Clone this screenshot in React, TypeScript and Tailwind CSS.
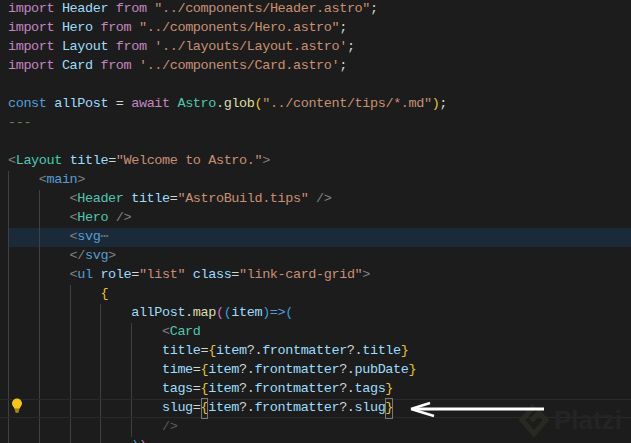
const KW = "text-[#c586c0]";
const VAR = "text-[#9cdcfe]";
const STR = "text-[#c98f74]";
const TAG = "text-[#4ec9b0]";
const BLUE = "text-[#569cd6]";
const GRAY = "text-[#808080]";
const GOLD = "text-[#e6c33a]";
const FN = "text-[#dcdcaa]";
const PINK = "text-[#c86fc4]";
const SKY = "text-[#3d9bdc]";
const TXT = "text-[#d4d4d4]";

type Seg = [string, string];

function Row({
  guides = 0,
  segs = [],
  kind = "plain",
}: {
  guides?: number;
  segs?: Seg[];
  kind?: "plain" | "folded" | "current";
}) {
  const bg =
    kind === "folded"
      ? "bg-[#1b2a39]"
      : kind === "current"
        ? "-ml-2 pl-2 border-y border-[#2a2a2a]"
        : "";
  return (
    <div className={`flex h-[19px] items-center whitespace-pre ${bg}`}>
      {Array.from({ length: guides }).map((_, i) => (
        <span key={i} className="h-full w-[30.8px] shrink-0 border-l border-[#404040]" />
      ))}
      {segs.map(([t, c], i) => (
        <span key={i} className={c}>
          {t}
        </span>
      ))}
    </div>
  );
}

const imp = (name: string, path: string): Seg[] => [
  ["import ", KW],
  [name, VAR],
  [" ", TXT],
  ["from ", KW],
  [path, STR],
  [";", TXT],
];

const MATCHED = `${GOLD} outline outline-1 -outline-offset-1 outline-[#777]`;

export default function App() {
  return (
    <div className="relative h-[443px] w-[631px] overflow-hidden bg-[#1c1c1c]">
      <div className="pl-2 font-['Liberation_Mono',monospace] text-[13.5px] tracking-[-0.4px]">
        <Row segs={imp("Header", '"../components/Header.astro"')} />
        <Row segs={imp("Hero", '"../components/Hero.astro"')} />
        <Row segs={imp("Layout", "'../layouts/Layout.astro'")} />
        <Row segs={imp("Card", "'../components/Card.astro'")} />
        <Row />
        <Row
          segs={[
            ["const ", BLUE],
            ["allPost ", VAR],
            ["= ", TXT],
            ["await ", KW],
            ["Astro", TAG],
            [".", TXT],
            ["glob", FN],
            ["(", GOLD],
            ['"../content/tips/*.md"', STR],
            [")", GOLD],
            [";", TXT],
          ]}
        />
        <Row segs={[["---", "text-[#5f8a4e]"]]} />
        <Row />
        <Row
          segs={[
            ["<", GRAY],
            ["Layout ", TAG],
            ["title", VAR],
            ["=", TXT],
            ['"Welcome to Astro."', STR],
            [">", GRAY],
          ]}
        />
        <Row
          guides={1}
          segs={[
            ["<", GRAY],
            ["main", BLUE],
            [">", GRAY],
          ]}
        />
        <Row
          guides={2}
          segs={[
            ["<", GRAY],
            ["Header ", TAG],
            ["title", VAR],
            ["=", TXT],
            ['"AstroBuild.tips"', STR],
            [" />", GRAY],
          ]}
        />
        <Row
          guides={2}
          segs={[
            ["<", GRAY],
            ["Hero ", TAG],
            ["/>", GRAY],
          ]}
        />
        <Row
          guides={2}
          kind="folded"
          segs={[
            ["<", GRAY],
            ["svg", BLUE],
            ["⋯", "text-[#707070]"],
          ]}
        />
        <Row
          guides={2}
          segs={[
            ["</", GRAY],
            ["svg", BLUE],
            [">", GRAY],
          ]}
        />
        <Row
          guides={2}
          segs={[
            ["<", GRAY],
            ["ul ", BLUE],
            ["role", VAR],
            ["=", TXT],
            ['"list" ', STR],
            ["class", VAR],
            ["=", TXT],
            ['"link-card-grid"', STR],
            [">", GRAY],
          ]}
        />
        <Row guides={3} segs={[["{", GOLD]]} />
        <Row
          guides={4}
          segs={[
            ["allPost", VAR],
            [".", TXT],
            ["map", FN],
            ["(", PINK],
            ["(", SKY],
            ["item", VAR],
            [")", SKY],
            ["=>", BLUE],
            ["(", SKY],
          ]}
        />
        <Row
          guides={5}
          segs={[
            ["<", GRAY],
            ["Card", TAG],
          ]}
        />
        <Row
          guides={5}
          segs={[
            ["title", VAR],
            ["=", TXT],
            ["{", GOLD],
            ["item", VAR],
            ["?.", TXT],
            ["frontmatter", VAR],
            ["?.", TXT],
            ["title", VAR],
            ["}", GOLD],
          ]}
        />
        <Row
          guides={5}
          segs={[
            ["time", VAR],
            ["=", TXT],
            ["{", GOLD],
            ["item", VAR],
            ["?.", TXT],
            ["frontmatter", VAR],
            ["?.", TXT],
            ["pubDate", VAR],
            ["}", GOLD],
          ]}
        />
        <Row
          guides={5}
          segs={[
            ["tags", VAR],
            ["=", TXT],
            ["{", GOLD],
            ["item", VAR],
            ["?.", TXT],
            ["frontmatter", VAR],
            ["?.", TXT],
            ["tags", VAR],
            ["}", GOLD],
          ]}
        />
        <Row
          guides={5}
          kind="current"
          segs={[
            ["slug", VAR],
            ["=", TXT],
            ["{", MATCHED],
            ["item", VAR],
            ["?.", TXT],
            ["frontmatter", VAR],
            ["?.", TXT],
            ["slug", VAR],
            ["}", MATCHED],
          ]}
        />
        <Row guides={5} segs={[["/>", "text-[#5a5a5a]"]]} />
        <Row
          guides={4}
          segs={[
            [")", SKY],
            [")", PINK],
          ]}
        />
      </div>

      <svg className="absolute left-[11px] top-[398px]" width="12" height="15" viewBox="0 0 12 15">
        <path
          d="M6 .5a5 5 0 0 0-5 5c0 2 1.2 2.8 1.9 4 .3.5.4.9.4 1.2h5.4c0-.3.1-.7.4-1.2.7-1.2 1.9-2 1.9-4a5 5 0 0 0-5-5z"
          fill="#f5c518"
        />
        <rect x="3.8" y="11.4" width="4.4" height="1.2" fill="#f5c518" />
        <rect x="4.4" y="13.2" width="3.2" height="1.4" fill="#d9ae15" />
      </svg>

      <div className="absolute left-[518px] top-[401px] flex items-center gap-1 font-['Liberation_Sans',sans-serif] text-[26px] font-bold text-[#242424]">
        <svg width="32" height="36" viewBox="0 0 32 36" className="shrink-0">
          <path d="M16 3L4 17l12 14 12-14-7-7-8 8" fill="none" stroke="#282a22" strokeWidth="5" />
        </svg>
        <span>Platzi</span>
      </div>

      <svg className="absolute left-[408px] top-[400px]" width="140" height="18" viewBox="0 0 140 18">
        <path d="M5 9H136" stroke="#fff" strokeWidth="3" />
        <path d="M3 9L22 3M3 9L26 16" stroke="#fff" strokeWidth="2.5" fill="none" />
      </svg>
    </div>
  );
}
